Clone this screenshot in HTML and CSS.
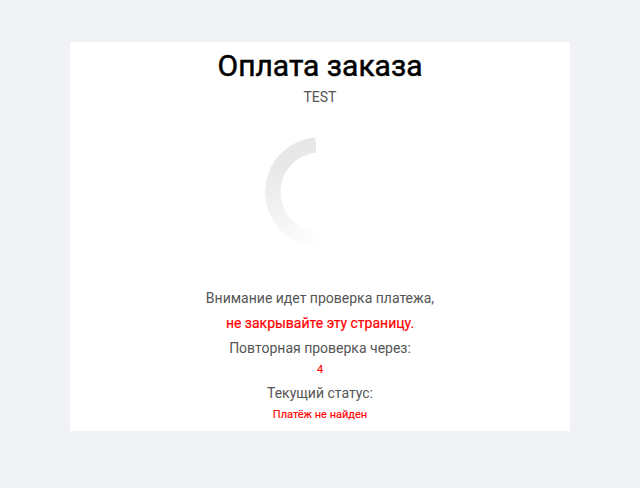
FILE: index.html
```html
<!DOCTYPE html>
<html lang="ru">
<head>
  <meta charset="UTF-8" />
  <title>Оплата заказа</title>
  <link rel="stylesheet" href="styles.css">
</head>
<body>
  <div class="payment-card">
    <h1 class="payment-title">Оплата заказа</h1>
    <div class="payment-order">TEST</div>

    <!-- Loader -->
    <div class="loader-wrap">
      <div class="loader"></div>
    </div>

    <div class="payment-info">
      <p class="info-line">Внимание идет проверка платежа,</p>
      <p class="info-line warn">не закрывайте эту страницу.</p>
      <p class="info-line">Повторная проверка через:</p>
      <p class="info-line small">4</p>
      <p class="info-line">Текущий статус:</p>
      <p class="info-line small">Платёж не найден</p>
    </div>
  </div>
</body>
</html>
```

FILE: styles.css
```css
/* Basic reset */
body, html {
  margin: 0;
  padding: 0;
}
body {
  background: #f1f2f6;
  font-family: Roboto, "Liberation Sans", sans-serif;
}
/* Card */
.payment-card {
  width: 500px;
  margin: 42px auto 0;
  background: #fff;
  text-align: center;
  padding: 7px 0 1px;
  box-sizing: border-box;
}
.payment-title {
  margin: 0;
  font-size: 30px;
  font-weight: 400;
  line-height: 34px;
  color: #000;
  -webkit-text-stroke: 0.5px #000; /* medium weight look */
}
.payment-order {
  font-size: 14px;
  color: #555;
  margin-top: 6px;
  line-height: 16px;
}
/* Spinner */
.loader-wrap {
  display: flex;
  justify-content: center;
  padding: 32px 0 43px;
}
.loader {
  width: 110px;
  height: 110px;
  border-radius: 50%;
  background: conic-gradient(from 180deg, rgba(232,232,232,0) 0deg, #e8e8e8 120deg, #e8e8e8 175deg, rgba(232,232,232,0) 175deg);
  -webkit-mask: radial-gradient(circle, transparent 39px, #000 40px);
  mask: radial-gradient(circle, transparent 39px, #000 40px);
}
/* Status text */
.payment-info {
  display: flex;
  flex-direction: column;
}
.info-line {
  margin: 0 0 9px;
  font-size: 14px;
  line-height: 16px;
  color: #555;
}
.info-line.warn {
  color: #f00;
  -webkit-text-stroke: 0.2px #f00;
}
.info-line.small {
  margin-top: -2px;
  font-size: 11px;
  line-height: 13px;
  color: #f00;
  -webkit-text-stroke: 0.15px #f00;
}
```
